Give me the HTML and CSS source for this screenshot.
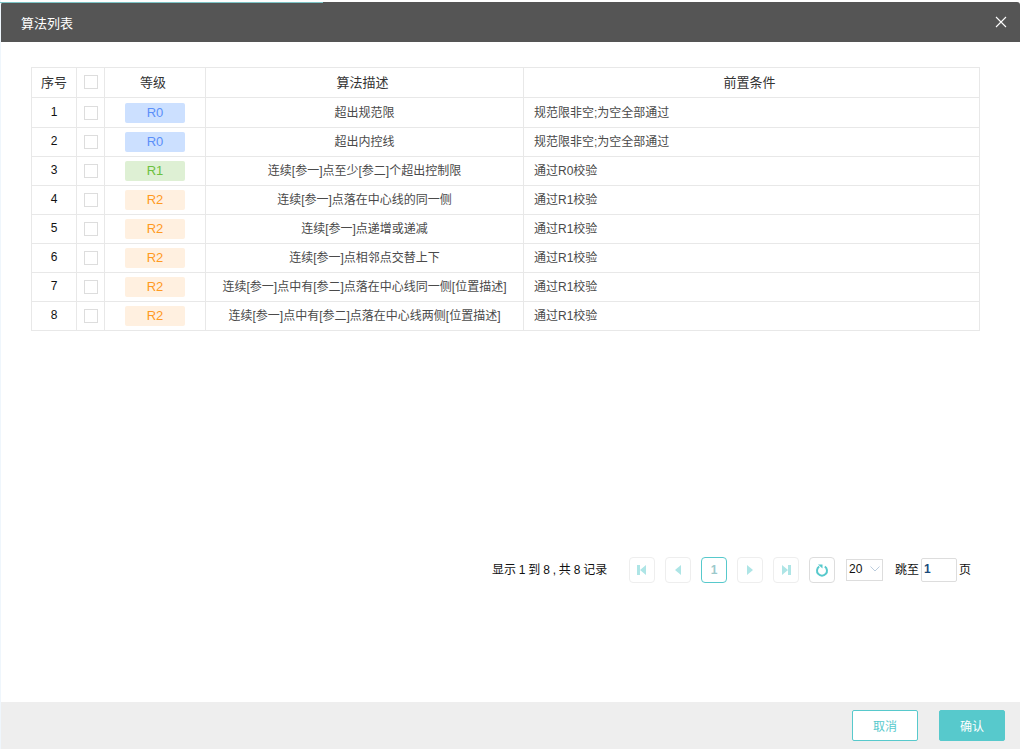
FILE: index.html
```html
<!DOCTYPE html>
<html lang="zh-CN">
<head>
  <meta charset="UTF-8">
  <title>算法列表</title>
  <link rel="stylesheet" href="styles.css">
</head>
<body>
  <div class="modal">
    <div class="modal-header">
      <span class="modal-title">算法列表</span>
      <svg class="close-icon" width="12" height="12" viewBox="0 0 12 12"><path d="M1 1L11 11M11 1L1 11" stroke="#fff" stroke-width="1.1" fill="none"/></svg>
    </div>
    <div class="modal-body">
      <table class="algo-table">
        <colgroup>
          <col class="col-no"><col class="col-check"><col class="col-level"><col class="col-desc"><col class="col-pre">
        </colgroup>
        <thead>
          <tr>
            <th>序号</th>
            <th><span class="checkbox"></span></th>
            <th class="shifted">等级</th>
            <th class="shifted">算法描述</th>
            <th class="shifted">前置条件</th>
          </tr>
        </thead>
        <tbody>
          <tr><td class="no">1</td><td><span class="checkbox"></span></td><td><span class="tag r0">R0</span></td><td class="desc">超出规范限</td><td class="pre">规范限非空;为空全部通过</td></tr>
          <tr><td class="no">2</td><td><span class="checkbox"></span></td><td><span class="tag r0">R0</span></td><td class="desc">超出内控线</td><td class="pre">规范限非空;为空全部通过</td></tr>
          <tr><td class="no">3</td><td><span class="checkbox"></span></td><td><span class="tag r1">R1</span></td><td class="desc">连续[参一]点至少[参二]个超出控制限</td><td class="pre">通过R0校验</td></tr>
          <tr><td class="no">4</td><td><span class="checkbox"></span></td><td><span class="tag r2">R2</span></td><td class="desc">连续[参一]点落在中心线的同一侧</td><td class="pre">通过R1校验</td></tr>
          <tr><td class="no">5</td><td><span class="checkbox"></span></td><td><span class="tag r2">R2</span></td><td class="desc">连续[参一]点递增或递减</td><td class="pre">通过R1校验</td></tr>
          <tr><td class="no">6</td><td><span class="checkbox"></span></td><td><span class="tag r2">R2</span></td><td class="desc">连续[参一]点相邻点交替上下</td><td class="pre">通过R1校验</td></tr>
          <tr><td class="no">7</td><td><span class="checkbox"></span></td><td><span class="tag r2">R2</span></td><td class="desc">连续[参一]点中有[参二]点落在中心线同一侧[位置描述]</td><td class="pre">通过R1校验</td></tr>
          <tr><td class="no">8</td><td><span class="checkbox"></span></td><td><span class="tag r2">R2</span></td><td class="desc">连续[参一]点中有[参二]点落在中心线两侧[位置描述]</td><td class="pre">通过R1校验</td></tr>
        </tbody>
      </table>
      <div class="pager">
        <span class="pager-info">显示 1 到 8 , 共 8 记录</span>
        <div class="pager-btns">
          <span class="page-btn"><svg width="12" height="12" viewBox="0 0 12 12"><path d="M1 1h3v10H1zM10 1v10L4 6z" fill="#aee5e6"/></svg></span>
          <span class="page-btn"><svg width="12" height="12" viewBox="0 0 12 12"><path d="M9 1v10L3 6z" fill="#aee5e6"/></svg></span>
          <span class="page-btn current">1</span>
          <span class="page-btn"><svg width="12" height="12" viewBox="0 0 12 12"><path d="M3 1v10l6-5z" fill="#aee5e6"/></svg></span>
          <span class="page-btn"><svg width="12" height="12" viewBox="0 0 12 12"><path d="M2 1v10l6-5zM8 1h3v10H8z" fill="#aee5e6"/></svg></span>
          <span class="page-btn refresh"><svg width="14" height="14" viewBox="0 0 14 14"><path d="M4.200 3.500a5 5 0 1 0 5.600 0" stroke="#57c9cc" stroke-width="2" fill="none"/><path d="M3 1.500h4.500v4z" fill="#57c9cc"/></svg></span>
        </div>
        <span class="size-select">20<svg width="10" height="6" viewBox="0 0 10 6"><path d="M0.500 0.500L5 5L9.500 0.500" stroke="#bcd" stroke-width="1" fill="none"/></svg></span>
        <span class="jump"><span class="jump-text">跳至</span><span class="jump-input">1</span><span class="jump-text">页</span></span>
      </div>
    </div>
    <div class="modal-footer">
      <button class="btn btn-cancel">取消</button>
      <button class="btn btn-ok">确认</button>
    </div>
  </div>
</body>
</html>
```

FILE: styles.css
```css
* {
  box-sizing: border-box;
}

html, body {
  height: 100%;
}

body {
  margin: 0;
  padding-top: 2px;
  border-left: 1px solid #eff6fc;
  background: #fff;
  font-family: "Liberation Sans", "Noto Sans CJK SC", sans-serif;
  font-size: 12px;
  color: #4a4a4a;
  overflow: hidden;
}

/* edge of the page underneath the dialog */
body::before {
  content: "";
  position: absolute;
  top: 0;
  left: 0;
  width: 323px;
  height: 2px;
  border-bottom: 1px solid #7cc4c6;
}

.modal {
  height: 747px;
  display: flex;
  flex-direction: column;
  background: #fff;
}

.modal-header {
  height: 40px;
  flex: none;
  display: flex;
  align-items: center;
  justify-content: space-between;
  padding: 0 13px 0 20px;
  background: #555;
  border-radius: 3px 3px 0 0;
}

.modal-title {
  font-size: 13px;
  color: #fff;
}

.close-icon {
  margin-top: -1px;
}

.modal-body {
  flex: 1;
  padding: 25px 40px 0 30px;
}

.algo-table {
  width: 949px;
  border-collapse: collapse;
  table-layout: fixed;
}

.col-no { width: 45px; }
.col-check { width: 28px; }
.col-level { width: 101px; }
.col-desc { width: 318px; }

.algo-table th,
.algo-table td {
  border: 1px solid #e8e8e8;
  text-align: center;
  padding: 0;
  height: 29px;
}

.algo-table th {
  height: 30px;
  padding-bottom: 2px;
  font-size: 13px;
  font-weight: normal;
  color: #333;
}

.algo-table th.shifted {
  padding-right: 4px;
}

.algo-table tbody tr:first-child td {
  height: 30px;
}

.algo-table td.no {
  padding-bottom: 2px;
  color: #111;
}

.algo-table td.desc {
  padding-bottom: 3px;
}

.algo-table td.pre {
  text-align: left;
  padding: 0 0 3px 10px;
}

.checkbox {
  display: block;
  width: 14px;
  height: 14px;
  margin: 0 auto;
  border: 1px solid #ddd;
  background: #fff;
}

.tag {
  display: block;
  width: 60px;
  height: 20px;
  line-height: 20px;
  margin: 0 auto;
  border-radius: 2px;
  font-size: 13px;
}

/* first row is a pixel taller */
tbody tr:first-child .checkbox,
tbody tr:first-child .tag {
  margin-top: 1px;
}

.r0 { background: #cce0ff; color: #5b8ff9; }
.r1 { background: #def0d4; color: #6cc13f; }
.r2 { background: #fff0e0; color: #ff9a1f; }

.pager {
  display: flex;
  align-items: center;
  margin-top: 226px;
  padding-left: 461px;
  color: #111;
}

.pager-info {
  width: 137px;
  padding-bottom: 3px;
  word-spacing: -0.5px;
}

.pager-btns {
  display: flex;
  gap: 10px;
}

.page-btn {
  width: 26px;
  height: 26px;
  display: flex;
  align-items: center;
  justify-content: center;
  border: 1px solid #eee;
  border-radius: 4px;
  color: #aaa;
  font-weight: bold;
}

.page-btn.current {
  border-color: #57c9cc;
  color: #9cc9cb;
}

.page-btn.refresh {
  border-color: #ddd;
}

.size-select {
  width: 37px;
  height: 22px;
  margin-left: 11px;
  padding: 0 2px 2px;
  display: flex;
  align-items: center;
  justify-content: space-between;
  border: 1px solid #ddd;
  color: #111;
}

.jump {
  display: flex;
  align-items: center;
  margin-left: 12px;
}

.jump-text {
  padding-bottom: 4px;
}

.jump-input {
  width: 36px;
  height: 24px;
  line-height: 20px;
  margin: 0 2px;
  padding-left: 2px;
  border: 1px solid #ddd;
  border-radius: 2px;
  font-weight: bold;
  color: #1a4a7a;
}

.modal-footer {
  height: 47px;
  flex: none;
  display: flex;
  justify-content: flex-end;
  align-items: center;
  gap: 21px;
  padding-right: 15px;
  background: #eee;
}

.btn {
  width: 66px;
  height: 31px;
  border-radius: 2px;
  font-family: inherit;
  font-size: 12px;
  border: 1px solid #57c9cc;
}

.btn-cancel {
  background: #fff;
  color: #57c9cc;
}

.btn-ok {
  background: #57c9cc;
  color: #fff;
}
```
